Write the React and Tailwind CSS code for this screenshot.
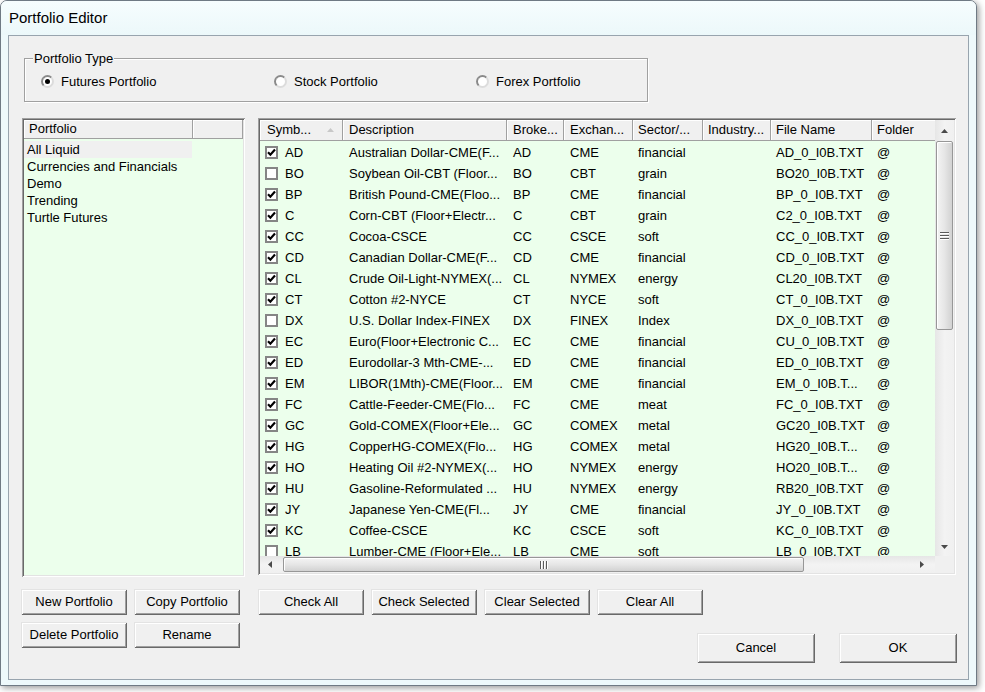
import React from "react";

const FONT = "font-['Liberation_Sans',Arial,sans-serif]";
const RAISED =
  "shadow-[inset_1px_1px_0_#e3e3e3,inset_-1px_-1px_0_#696969,inset_2px_2px_0_#ffffff,inset_-2px_-2px_0_#a0a0a0]";
const SUNKEN =
  "shadow-[inset_1px_1px_0_#a0a0a0,inset_-1px_-1px_0_#ffffff,inset_2px_2px_0_#696969,inset_-2px_-2px_0_#e3e3e3]";
const HEAD =
  "h-full shrink-0 flex items-center bg-[#f0f0f0] border-r border-b border-r-[#a0a0a0] border-b-[#a0a0a0] shadow-[inset_1px_1px_0_#ffffff] whitespace-nowrap overflow-hidden";

const portfolios = ["All Liquid", "Currencies and Financials", "Demo", "Trending", "Turtle Futures"];

const rows = [
  ["AD", true, "Australian Dollar-CME(F...", "AD", "CME", "financial", "AD_0_I0B.TXT"],
  ["BO", false, "Soybean Oil-CBT (Floor...", "BO", "CBT", "grain", "BO20_I0B.TXT"],
  ["BP", true, "British Pound-CME(Floo...", "BP", "CME", "financial", "BP_0_I0B.TXT"],
  ["C", true, "Corn-CBT (Floor+Electr...", "C", "CBT", "grain", "C2_0_I0B.TXT"],
  ["CC", true, "Cocoa-CSCE", "CC", "CSCE", "soft", "CC_0_I0B.TXT"],
  ["CD", true, "Canadian Dollar-CME(F...", "CD", "CME", "financial", "CD_0_I0B.TXT"],
  ["CL", true, "Crude Oil-Light-NYMEX(...", "CL", "NYMEX", "energy", "CL20_I0B.TXT"],
  ["CT", true, "Cotton #2-NYCE", "CT", "NYCE", "soft", "CT_0_I0B.TXT"],
  ["DX", false, "U.S. Dollar Index-FINEX", "DX", "FINEX", "Index", "DX_0_I0B.TXT"],
  ["EC", true, "Euro(Floor+Electronic C...", "EC", "CME", "financial", "CU_0_I0B.TXT"],
  ["ED", true, "Eurodollar-3 Mth-CME-...", "ED", "CME", "financial", "ED_0_I0B.TXT"],
  ["EM", true, "LIBOR(1Mth)-CME(Floor...", "EM", "CME", "financial", "EM_0_I0B.T..."],
  ["FC", true, "Cattle-Feeder-CME(Flo...", "FC", "CME", "meat", "FC_0_I0B.TXT"],
  ["GC", true, "Gold-COMEX(Floor+Ele...", "GC", "COMEX", "metal", "GC20_I0B.TXT"],
  ["HG", true, "CopperHG-COMEX(Flo...", "HG", "COMEX", "metal", "HG20_I0B.T..."],
  ["HO", true, "Heating Oil #2-NYMEX(...", "HO", "NYMEX", "energy", "HO20_I0B.T..."],
  ["HU", true, "Gasoline-Reformulated ...", "HU", "NYMEX", "energy", "RB20_I0B.TXT"],
  ["JY", true, "Japanese Yen-CME(Fl...", "JY", "CME", "financial", "JY_0_I0B.TXT"],
  ["KC", true, "Coffee-CSCE", "KC", "CSCE", "soft", "KC_0_I0B.TXT"],
  ["LB", false, "Lumber-CME (Floor+Ele...", "LB", "CME", "soft", "LB_0_I0B.TXT"],
];

function Button({ children, className }) {
  return (
    <div className={`bg-[#f0f0f0] flex items-center justify-center ${RAISED} ${className}`}>{children}</div>
  );
}

function Radio({ on }) {
  return (
    <div className="w-[13px] h-[13px] shrink-0 rounded-full bg-white border-2 border-t-[#8a8a8a] border-l-[#8a8a8a] border-r-[#dcdcdc] border-b-[#dcdcdc] flex items-center justify-center">
      {on && <div className="w-[5px] h-[5px] rounded-full bg-black" />}
    </div>
  );
}

function Check({ on }) {
  return (
    <div className="w-[13px] h-[13px] shrink-0 bg-white border-2 border-[#858585] flex items-center justify-center">
      {on && (
        <svg width="9" height="9" viewBox="0 0 9 9">
          <path d="M1 4.2 L3.4 6.7 L8 1.6" stroke="#000" strokeWidth="2.2" fill="none" />
        </svg>
      )}
    </div>
  );
}

function Arrow({ dir }) {
  const pts = {
    up: "0,4 3.5,0 7,4",
    down: "0,0 3.5,4 7,0",
    left: "4,0 0,3.5 4,7",
    right: "0,0 4,3.5 0,7",
  }[dir];
  const vertical = dir === "up" || dir === "down";
  return (
    <svg width={vertical ? 7 : 4} height={vertical ? 4 : 7} viewBox={vertical ? "0 0 7 4" : "0 0 4 7"}>
      <polygon points={pts} fill="#4a4a4a" />
    </svg>
  );
}

export default function App() {
  return (
    <div className={`w-[985px] h-[692px] bg-white overflow-hidden ${FONT} text-[13px] text-black`}>
      <div className="w-[977px] h-[686px] flex flex-col rounded-t-[7px] border border-[#6f7a84] bg-[#eef9fb] shadow-[2px_2px_6px_rgba(0,0,0,0.4)]">
        {/* title bar */}
        <div className="h-[34px] shrink-0 flex items-center pl-[8px] text-[15px] rounded-t-[6px] bg-linear-to-b from-[#f6fdfe] to-[#ecf8fa]">
          Portfolio Editor
        </div>

        <div className="flex-1 flex px-[7px] pb-[5px]">
          <div className="flex-1 flex flex-col bg-[#f0f0f0] border border-[#98a4ae]">
            {/* portfolio type group */}
            <div className="relative ml-[15px] mt-[22px] w-[624px] h-[44px] border border-[#a0a0a0] shadow-[inset_1px_1px_0_#ffffff,1px_1px_0_#ffffff]">
              <span className="absolute left-[8px] -top-[8px] px-[1px] bg-[#f0f0f0] leading-[16px]">Portfolio Type</span>
              <div className="flex items-center h-full pt-[3px] pl-[16px]">
                <div className="w-[233px] flex items-center gap-[7px]">
                  <Radio on />
                  <span>Futures Portfolio</span>
                </div>
                <div className="w-[202px] flex items-center gap-[7px]">
                  <Radio />
                  <span>Stock Portfolio</span>
                </div>
                <div className="flex items-center gap-[7px]">
                  <Radio />
                  <span>Forex Portfolio</span>
                </div>
              </div>
            </div>

            {/* lists */}
            <div className="flex ml-[13px] mt-[16px] gap-[13px]">
              {/* portfolio list */}
              <div className={`w-[223px] h-[459px] p-[2px] bg-[#ecffec] ${SUNKEN}`}>
                <div className="h-[19px] flex">
                  <div className={`${HEAD} w-[169px] pl-[5px]`}>Portfolio</div>
                  <div className={`${HEAD} flex-1`} />
                </div>
                <div className="pt-[2px]">
                  {portfolios.map((p, i) => (
                    <div
                      key={p}
                      className={`h-[17px] w-[168px] pl-[3px] flex items-center ${i === 0 ? "bg-[#f0f0f0]" : ""}`}
                    >
                      {p}
                    </div>
                  ))}
                </div>
              </div>

              {/* symbols table */}
              <div className={`w-[698px] h-[457px] p-[2px] bg-[#ecffec] flex flex-col ${SUNKEN}`}>
                <div className="flex flex-1 min-h-0">
                  <div className="w-[675px] overflow-hidden flex flex-col">
                    <div className="h-[21px] shrink-0 flex">
                      <div className={`${HEAD} w-[83px] pl-[7px] relative`}>
                        Symb...
                        <svg className="absolute left-[67px] top-[8px]" width="7" height="4" viewBox="0 0 7 4">
                          <polygon points="0,4 3.5,0 7,4" fill="#c8c8c8" />
                        </svg>
                      </div>
                      <div className={`${HEAD} w-[164px] pl-[6px]`}>Description</div>
                      <div className={`${HEAD} w-[57px] pl-[6px]`}>Broke...</div>
                      <div className={`${HEAD} w-[69px] pl-[6px]`}>Exchan...</div>
                      <div className={`${HEAD} w-[70px] pl-[5px]`}>Sector/...</div>
                      <div className={`${HEAD} w-[68px] pl-[5px]`}>Industry...</div>
                      <div className={`${HEAD} w-[101px] pl-[5px]`}>File Name</div>
                      <div className={`${HEAD} w-[90px] pl-[5px]`}>Folder</div>
                    </div>
                    <div className="flex-1 overflow-hidden pt-[1px]">
                      {rows.map((r) => (
                        <div key={r[0]} className="h-[21px] flex items-center whitespace-nowrap">
                          <div className="w-[83px] shrink-0 pl-[5px] flex items-center gap-[7px]">
                            <Check on={r[1]} />
                            <span>{r[0]}</span>
                          </div>
                          <div className="w-[164px] shrink-0 pl-[6px] overflow-hidden">{r[2]}</div>
                          <div className="w-[57px] shrink-0 pl-[6px]">{r[3]}</div>
                          <div className="w-[69px] shrink-0 pl-[6px]">{r[4]}</div>
                          <div className="w-[70px] shrink-0 pl-[5px]">{r[5]}</div>
                          <div className="w-[68px] shrink-0 pl-[5px]" />
                          <div className="w-[101px] shrink-0 pl-[5px]">{r[6]}</div>
                          <div className="w-[90px] shrink-0 pl-[5px]">@</div>
                        </div>
                      ))}
                    </div>
                  </div>

                  {/* vertical scrollbar */}
                  <div className="w-[19px] flex flex-col bg-linear-to-r from-[#e6e6e6] via-[#f3f3f3] to-[#f0f0f0]">
                    <div className="h-[21px] flex items-center justify-center">
                      <Arrow dir="up" />
                    </div>
                    <div className="mx-[1px] h-[189px] rounded-[2px] border border-[#979797] bg-linear-to-r from-[#f4f4f4] via-[#e6e6e6] to-[#d2d2d2] shadow-[inset_1px_1px_0_#ffffff] flex items-center justify-center">
                      <svg width="9" height="8" viewBox="0 0 9 8">
                        <rect x="0" y="0" width="9" height="1" fill="#5a5a5a" />
                        <rect x="0" y="3" width="9" height="1" fill="#5a5a5a" />
                        <rect x="0" y="6" width="9" height="1" fill="#5a5a5a" />
                        <rect x="0" y="1" width="9" height="1" fill="#ffffff" />
                        <rect x="0" y="4" width="9" height="1" fill="#ffffff" />
                        <rect x="0" y="7" width="9" height="1" fill="#ffffff" />
                      </svg>
                    </div>
                    <div className="flex-1" />
                    <div className="h-[19px] flex items-center justify-center">
                      <Arrow dir="down" />
                    </div>
                  </div>
                </div>

                {/* horizontal scrollbar */}
                <div className="h-[17px] shrink-0 flex">
                  <div className="w-[675px] flex items-center bg-linear-to-b from-[#e6e6e6] via-[#f3f3f3] to-[#f0f0f0]">
                    <div className="w-[19px] h-full flex items-center justify-center">
                      <Arrow dir="left" />
                    </div>
                    <div className="ml-[4px] w-[521px] h-[15px] rounded-[2px] border border-[#979797] bg-linear-to-b from-[#f4f4f4] via-[#e6e6e6] to-[#d2d2d2] shadow-[inset_1px_1px_0_#ffffff] flex items-center justify-center">
                      <svg width="8" height="8" viewBox="0 0 8 8">
                        <rect x="0" y="0" width="1" height="8" fill="#5a5a5a" />
                        <rect x="3" y="0" width="1" height="8" fill="#5a5a5a" />
                        <rect x="6" y="0" width="1" height="8" fill="#5a5a5a" />
                        <rect x="1" y="0" width="1" height="8" fill="#ffffff" />
                        <rect x="4" y="0" width="1" height="8" fill="#ffffff" />
                        <rect x="7" y="0" width="1" height="8" fill="#ffffff" />
                      </svg>
                    </div>
                    <div className="flex-1" />
                    <div className="w-[22px] h-full flex items-center justify-center pr-[4px]">
                      <Arrow dir="right" />
                    </div>
                  </div>
                  <div className="flex-1 bg-[#f0f0f0]" />
                </div>
              </div>
            </div>

            {/* buttons */}
            <div className="flex items-start ml-[12px] mt-[12px]">
              <div className="grid grid-cols-[106px_106px] content-start gap-x-[7px] gap-y-[7px]">
                <Button className="h-[26px]">New Portfolio</Button>
                <Button className="h-[26px]">Copy Portfolio</Button>
                <Button className="h-[26px]">Delete Portfolio</Button>
                <Button className="h-[26px]">Rename</Button>
              </div>
              <div className="ml-[18px] w-[699px] flex flex-col">
                <div className="flex gap-[7px]">
                  <Button className="w-[106px] h-[26px]">Check All</Button>
                  <Button className="w-[106px] h-[26px]">Check Selected</Button>
                  <Button className="w-[106px] h-[26px]">Clear Selected</Button>
                  <Button className="w-[106px] h-[26px]">Clear All</Button>
                </div>
                <div className="flex justify-end gap-[24px] mt-[18px]">
                  <Button className="w-[118px] h-[30px]">Cancel</Button>
                  <Button className="w-[118px] h-[30px]">OK</Button>
                </div>
              </div>
            </div>
          </div>
        </div>
      </div>
    </div>
  );
}
